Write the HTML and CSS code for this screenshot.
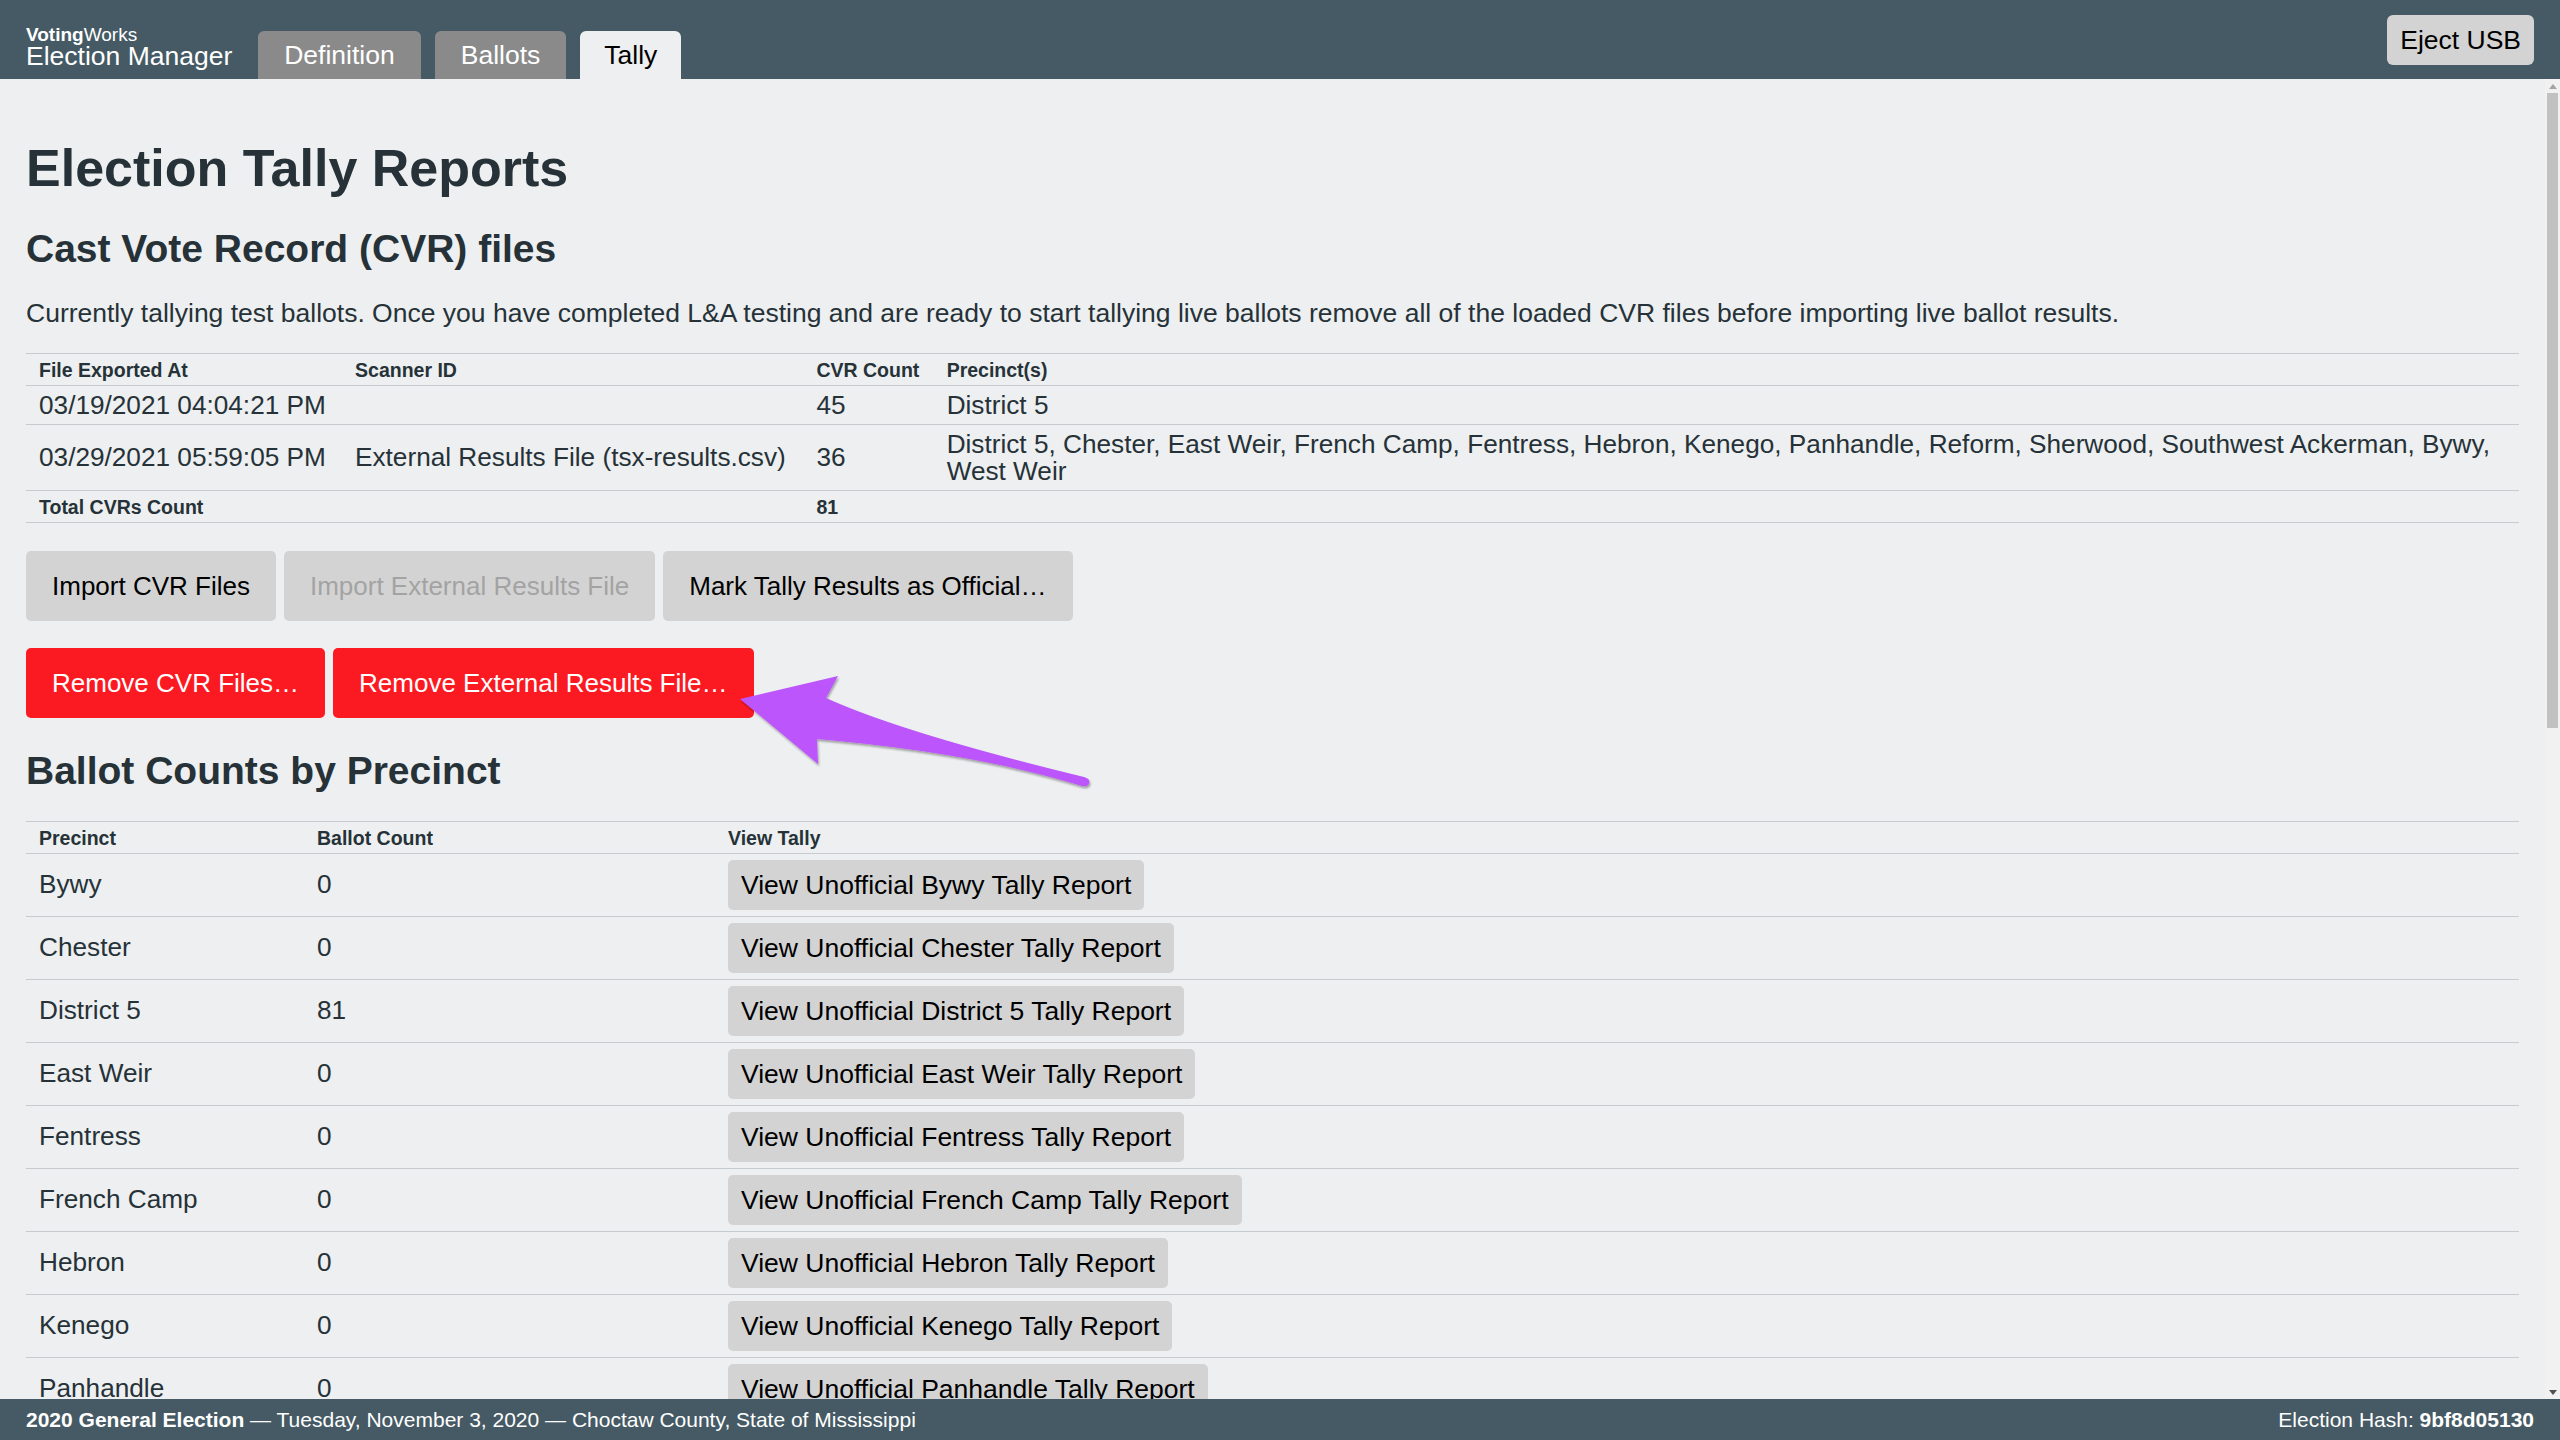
FILE: index.html
```html
<!DOCTYPE html>
<html lang="en">
<head>
<meta charset="utf-8">
<title>Election Manager – Tally</title>
<link rel="stylesheet" href="styles.css">
</head>
<body>
<div class="app">
  <header class="topbar">
    <div class="brand">
      <div class="brand-org"><b>Voting</b>Works</div>
      <div class="brand-app">Election Manager</div>
    </div>
    <nav class="tabs">
      <a class="tab">Definition</a>
      <a class="tab">Ballots</a>
      <a class="tab tab-active">Tally</a>
    </nav>
    <button class="btn eject">Eject USB</button>
  </header>

  <div class="viewport">
    <main class="main">
      <div class="content">
        <h1 class="title">Election Tally Reports</h1>
        <h2 class="section">Cast Vote Record (CVR) files</h2>
        <p class="note">Currently tallying test ballots. Once you have completed L&amp;A testing and are ready to start tallying live ballots remove all of the loaded CVR files before importing live ballot results.</p>

        <table class="grid cvr-table">
          <thead>
            <tr><th>File Exported At</th><th>Scanner ID</th><th>CVR Count</th><th>Precinct(s)</th></tr>
          </thead>
          <tbody>
            <tr><td>03/19/2021 04:04:21 PM</td><td></td><td>45</td><td>District 5</td></tr>
            <tr><td>03/29/2021 05:59:05 PM</td><td>External Results File (tsx-results.csv)</td><td>36</td><td class="precinct-list">District 5, Chester, East Weir, French Camp, Fentress, Hebron, Kenego, Panhandle, Reform, Sherwood, Southwest Ackerman, Bywy,<br>West Weir</td></tr>
            <tr class="total-row"><th>Total CVRs Count</th><th></th><th>81</th><th></th></tr>
          </tbody>
        </table>

        <div class="action-row">
          <button class="btn btn-big">Import CVR Files</button>
          <button class="btn btn-big btn-disabled">Import External Results File</button>
          <button class="btn btn-big">Mark Tally Results as Official…</button>
        </div>
        <div class="action-row">
          <button class="btn btn-big btn-danger">Remove CVR Files…</button>
          <button class="btn btn-big btn-danger">Remove External Results File…</button>
        </div>

        <h2 class="section section-counts">Ballot Counts by Precinct</h2>
        <table class="grid precinct-table">
          <thead>
            <tr><th class="col-precinct">Precinct</th><th class="col-count">Ballot Count</th><th>View Tally</th></tr>
          </thead>
          <tbody>
            <tr><td>Bywy</td><td>0</td><td><button class="btn btn-report">View Unofficial Bywy Tally Report</button></td></tr>
            <tr><td>Chester</td><td>0</td><td><button class="btn btn-report">View Unofficial Chester Tally Report</button></td></tr>
            <tr><td>District 5</td><td>81</td><td><button class="btn btn-report">View Unofficial District 5 Tally Report</button></td></tr>
            <tr><td>East Weir</td><td>0</td><td><button class="btn btn-report">View Unofficial East Weir Tally Report</button></td></tr>
            <tr><td>Fentress</td><td>0</td><td><button class="btn btn-report">View Unofficial Fentress Tally Report</button></td></tr>
            <tr><td>French Camp</td><td>0</td><td><button class="btn btn-report">View Unofficial French Camp Tally Report</button></td></tr>
            <tr><td>Hebron</td><td>0</td><td><button class="btn btn-report">View Unofficial Hebron Tally Report</button></td></tr>
            <tr><td>Kenego</td><td>0</td><td><button class="btn btn-report">View Unofficial Kenego Tally Report</button></td></tr>
            <tr><td>Panhandle</td><td>0</td><td><button class="btn btn-report">View Unofficial Panhandle Tally Report</button></td></tr>
            <tr><td>Reform</td><td>0</td><td><button class="btn btn-report">View Unofficial Reform Tally Report</button></td></tr>
            <tr><td>Sherwood</td><td>0</td><td><button class="btn btn-report">View Unofficial Sherwood Tally Report</button></td></tr>
            <tr><td>Southwest Ackerman</td><td>0</td><td><button class="btn btn-report">View Unofficial Southwest Ackerman Tally Report</button></td></tr>
            <tr><td>West Weir</td><td>0</td><td><button class="btn btn-report">View Unofficial West Weir Tally Report</button></td></tr>
          </tbody>
        </table>

        <svg class="annotation" width="400" height="140" viewBox="0 0 400 140" aria-hidden="true">
          <defs>
            <filter id="shadow" x="-10%" y="-20%" width="120%" height="150%">
              <feDropShadow dx="1" dy="2" stdDeviation="1.2" flood-color="#000" flood-opacity="0.35"/>
            </filter>
          </defs>
          <path filter="url(#shadow)" fill="#bc54fb" d="M20,39 L118,16 L106,38 Q183,73 364,117 Q371,119 369,124 Q367,127 362,126 Q253,92.5 97,79 L98,104 Z"/>
        </svg>
      </div>
    </main>

    <div class="scrollbar" aria-hidden="true">
      <div class="sb-arrow sb-up"></div>
      <div class="sb-track"><div class="sb-thumb"></div></div>
      <div class="sb-arrow sb-down"></div>
    </div>
  </div>

  <footer class="statusbar">
    <div class="status-left"><b>2020 General Election</b> — Tuesday, November 3, 2020 — Choctaw County, State of Mississippi</div>
    <div class="status-right">Election Hash: <b>9bf8d05130</b></div>
  </footer>
</div>
</body>
</html>
```

FILE: styles.css
```css
html, body {
  margin: 0;
  height: 100%;
}

body {
  font-family: "Liberation Sans", Arial, Helvetica, sans-serif;
  color: #263238;
  background: #edeff0;
  overflow: hidden;
}

.app {
  display: flex;
  flex-direction: column;
  height: 100vh;
}

/* ---------- top bar ---------- */
.topbar {
  flex: none;
  height: 79px;
  box-sizing: border-box;
  background: #455a64;
  display: flex;
  align-items: flex-end;
  padding: 0 26px;
}

.brand {
  color: #ffffff;
  padding-bottom: 11px;
  margin-right: 26px;
}

.brand-org {
  font-size: 19px;
  line-height: 19px;
}

.brand-app {
  font-size: 26.5px;
  line-height: 24px;
}

.tabs {
  display: flex;
  gap: 14px;
}

.tab {
  display: block;
  height: 48px;
  line-height: 48px;
  padding: 0 26px;
  font-size: 26.5px;
  color: #ffffff;
  background: #8a8a8a;
  border-radius: 6px 6px 0 0;
}

.tab-active {
  background: #edeff0;
  color: #000000;
  padding: 0 24px;
}

.btn {
  font-family: inherit;
  border: none;
  background: #d3d3d3;
  color: #000000;
  border-radius: 5px;
  margin: 0;
}

.eject {
  align-self: center;
  margin-left: auto;
  font-size: 26.5px;
  line-height: 30px;
  padding: 10px 13px;
  border-radius: 6px;
}

/* ---------- main ---------- */
.viewport {
  flex: 1;
  min-height: 0;
  display: flex;
}

.main {
  flex: 1;
  min-width: 0;
  overflow: hidden;
}

.scrollbar {
  flex: none;
  width: 15px;
  background: #f1f1f1;
  display: flex;
  flex-direction: column;
}

.sb-arrow {
  flex: none;
  height: 14px;
  display: flex;
  align-items: center;
  justify-content: center;
}

.sb-up::before,
.sb-down::before {
  content: "";
  width: 0;
  height: 0;
  border-left: 4px solid transparent;
  border-right: 4px solid transparent;
}

.sb-up::before {
  border-bottom: 5px solid #a3a3a3;
}

.sb-down::before {
  border-top: 5px solid #505050;
}

.sb-track {
  flex: 1;
  padding: 0 2px;
}

.sb-thumb {
  height: 635px;
  background: #c1c1c1;
}

.content {
  position: relative;
  padding: 58px 26px 60px;
}

.title {
  margin: 0 0 27px;
  font-size: 52px;
  line-height: 1.2;
  font-weight: bold;
}

.section {
  margin: 0 0 25px;
  font-size: 39px;
  line-height: 1.2;
  font-weight: bold;
}

.section-counts {
  margin-top: 30px;
  margin-bottom: 26px;
}

.note {
  margin: 0 0 23px;
  font-size: 26.5px;
  line-height: 1.2;
}

/* ---------- tables ---------- */
.grid {
  width: 100%;
  border-collapse: collapse;
  border-top: 1px solid #c6cbcf;
  margin-bottom: 28px;
}

.grid tr {
  border-bottom: 1px solid #c6cbcf;
}

.grid th {
  text-align: left;
  font-size: 19.5px;
  line-height: 20px;
  font-weight: bold;
  padding: 6px 13px 5px;
  white-space: nowrap;
}

.grid td {
  font-size: 26.2px;
  line-height: 27px;
  padding: 6px 13px 5px;
  vertical-align: middle;
}

.cvr-table td {
  white-space: nowrap;
}

.col-precinct {
  width: 252px;
}

.col-count {
  width: 385px;
}

.precinct-table td {
  padding: 6px 13px;
}

.btn-report {
  display: inline-block;
  font-size: 26.5px;
  line-height: 30px;
  padding: 10px 13px;
  white-space: nowrap;
}

/* ---------- action buttons ---------- */
.action-row {
  display: flex;
  gap: 8px;
  margin: 0 0 27px;
}

.btn-big {
  font-size: 26px;
  line-height: 32px;
  padding: 19px 26px;
}

.btn-disabled {
  color: #a3a3a3;
}

.btn-danger {
  background: #fc1a22;
  color: #ffffff;
}

.annotation {
  position: absolute;
  left: 720px;
  top: 581px;
  overflow: visible;
}

/* ---------- status bar ---------- */
.statusbar {
  flex: none;
  height: 41px;
  background: #455a64;
  color: #ffffff;
  display: flex;
  align-items: center;
  justify-content: space-between;
  padding: 0 26px;
  font-size: 21px;
}
```
